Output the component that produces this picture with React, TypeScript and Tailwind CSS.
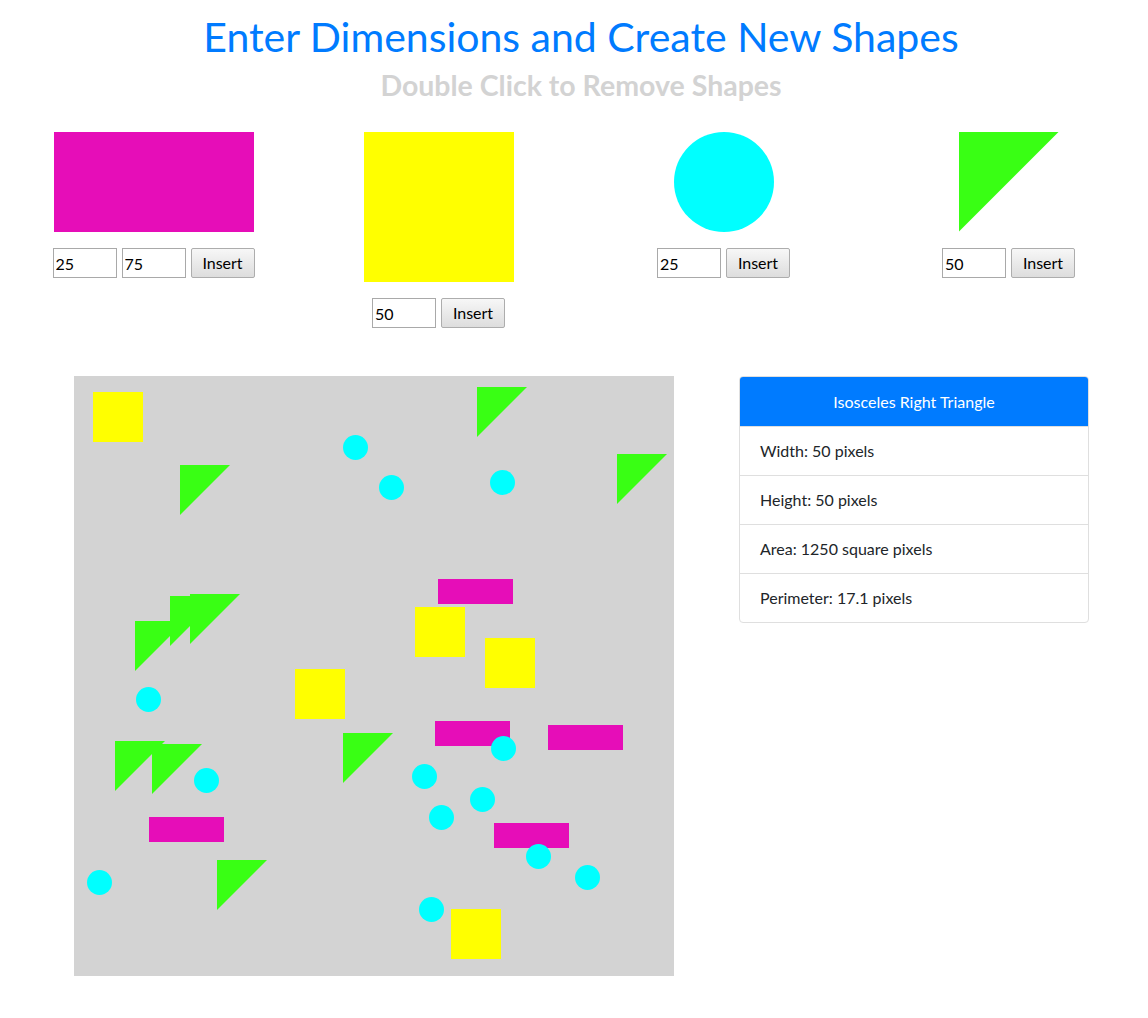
import React from 'react';

const squares = [[19, 16], [221, 293], [341, 231], [411, 262], [377, 533]];
const rects = [[364, 203], [75, 441], [361, 345], [474, 349], [420, 447]];
const circles = [
    [269, 59], [305, 99], [416, 94], [62, 311], [120, 392], [13, 494], [417, 360],
    [338, 388], [396, 411], [355, 429], [452, 468], [501, 489], [345, 521],
];
const triangles = [
    [106, 89], [61, 245], [96, 220], [116, 218], [403, 11], [543, 78],
    [41, 365], [78, 368], [143, 484], [269, 357],
];

const NumInput = ({ value }: { value: string }) => (
    <input
        type="text"
        defaultValue={value}
        className="w-16 h-[30px] border border-[#a9a9a9] bg-white px-[2px] text-base text-black outline-none"
    />
);

const InsertButton = () => (
    <button className="w-16 h-[30px] border border-[#adadad] rounded-[2px] bg-linear-to-b from-[#f7f7f7] to-[#dddddd] text-base text-black">
        Insert
    </button>
);

const App = () => {
    return (
        <div className="min-h-[1018px] bg-white font-['Lato',sans-serif] text-[#212529]">
            {/* Header */}
            <div className="pt-[13px] pl-[14px] text-center">
                <h1 className="text-[41px] leading-[48px] font-normal text-[#007bff]">
                    Enter Dimensions and Create New Shapes
                </h1>
                <h3 className="mt-[7px] text-[28.5px] leading-[34px] font-bold text-[#d3d3d3]">
                    Double Click to Remove Shapes
                </h3>
            </div>

            {/* Shape creators */}
            <div className="mt-[30px] ml-[11px] grid w-[1140px] grid-cols-4 items-start">
                <div className="flex flex-col items-center gap-4">
                    <div className="w-[200px] h-[100px] bg-[#e60db8]" />
                    <div className="flex gap-[5px]">
                        <NumInput value="25" />
                        <NumInput value="75" />
                        <InsertButton />
                    </div>
                </div>
                <div className="flex flex-col items-center gap-4">
                    <div className="w-[150px] h-[150px] bg-[#ffff00]" />
                    <div className="flex gap-[5px]">
                        <NumInput value="50" />
                        <InsertButton />
                    </div>
                </div>
                <div className="flex flex-col items-center gap-4">
                    <div className="w-[100px] h-[100px] rounded-full bg-[#00ffff]" />
                    <div className="flex gap-[5px]">
                        <NumInput value="25" />
                        <InsertButton />
                    </div>
                </div>
                <div className="flex flex-col items-center gap-4">
                    <div className="w-[100px] h-[100px] bg-[#39ff14] [clip-path:polygon(0_0,100%_0,0_100%)]" />
                    <div className="flex gap-[5px]">
                        <NumInput value="50" />
                        <InsertButton />
                    </div>
                </div>
            </div>

            {/* Canvas + info card */}
            <div className="mt-[48px] ml-[74px] flex items-start gap-[65px]">
                <div className="relative w-[600px] h-[600px] bg-[#d3d3d3] overflow-hidden">
                    {rects.map(([x, y], i) => (
                        <div key={'r' + i} className="absolute w-[75px] h-[25px] bg-[#e60db8]" style={{ left: x, top: y }} />
                    ))}
                    {squares.map(([x, y], i) => (
                        <div key={'s' + i} className="absolute w-[50px] h-[50px] bg-[#ffff00]" style={{ left: x, top: y }} />
                    ))}
                    {circles.map(([x, y], i) => (
                        <div key={'c' + i} className="absolute w-[25px] h-[25px] rounded-full bg-[#00ffff]" style={{ left: x, top: y }} />
                    ))}
                    {triangles.map(([x, y], i) => (
                        <div
                            key={'t' + i}
                            className="absolute w-[50px] h-[50px] bg-[#39ff14] [clip-path:polygon(0_0,100%_0,0_100%)]"
                            style={{ left: x, top: y }}
                        />
                    ))}
                </div>

                <div className="w-[350px] rounded border border-[#dfdfdf] overflow-hidden">
                    <div className="h-[49px] bg-[#007bff] text-white text-base flex items-center justify-center">
                        Isosceles Right Triangle
                    </div>
                    {['Width: 50 pixels', 'Height: 50 pixels', 'Area: 1250 square pixels', 'Perimeter: 17.1 pixels'].map((t) => (
                        <div key={t} className="border-t border-[#dfdfdf] px-5 py-3 text-base leading-6">
                            {t}
                        </div>
                    ))}
                </div>
            </div>
        </div>
    );
};

export default App;
